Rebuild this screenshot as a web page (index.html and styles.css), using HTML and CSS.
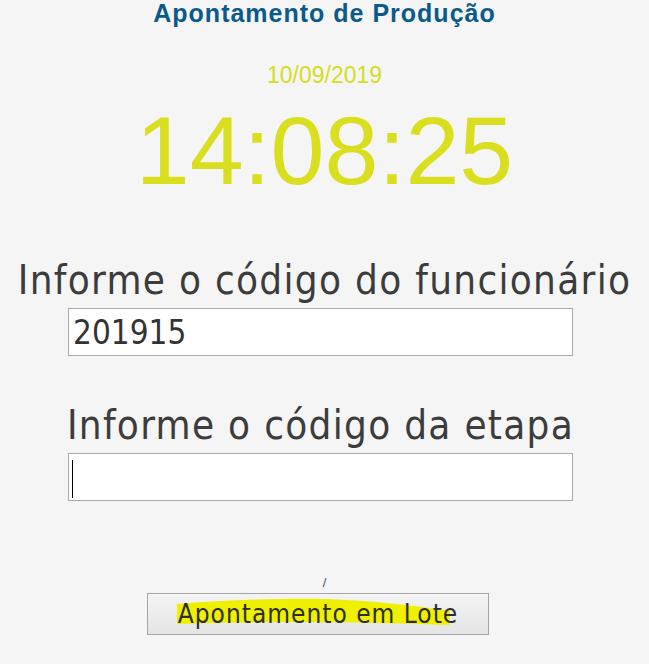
FILE: index.html
```html
<!DOCTYPE html>
<html>
<head>
<meta charset="utf-8">
<link rel="stylesheet" href="styles.css">
</head>
<body>
<div class="page">
  <h1 class="title">Apontamento de Produção</h1>
  <div class="date">10/09/2019</div>
  <div class="clock">14:08:25</div>
  <label class="label label-1">Informe o código do funcionário</label>
  <div class="field"><span class="value">201915</span></div>
  <label class="label label-2">Informe o código da etapa</label>
  <div class="field"><span class="caret"></span></div>
  <div class="slash">/</div>
  <button class="btn">
    <svg class="mark" width="342" height="42" viewBox="0 0 342 42"><path d="M30,11 C80,7 140,5 180,6 C230,8 270,13 303,18 L302,32 C250,30 200,29 150,29 C100,29 60,30 30,31 Z" fill="#eef000"/></svg>
    <span class="btn-text">Apontamento em Lote</span>
  </button>
</div>
</body>
</html>
```
FILE: styles.css
```css
html, body {
  margin: 0;
  padding: 0;
  background: #f5f5f5;
}
.page {
  display: flex;
  flex-direction: column;
  align-items: center;
  width: 649px;
  height: 664px;
  overflow: hidden;
}
.title {
  margin: 0;
  font-family: "Liberation Sans", Arial, sans-serif;
  font-weight: bold;
  font-size: 25px;
  letter-spacing: 1px;
  line-height: 26px;
  color: #0a5a8a;
}
.date {
  margin-top: 36px;
  font-family: "Liberation Sans", Arial, sans-serif;
  font-size: 23px;
  line-height: 26px;
  color: #d6dc1e;
}
.clock {
  margin-top: 8px;
  font-family: "Liberation Sans", Arial, sans-serif;
  font-size: 97px;
  line-height: 110px;
  color: #d9df1f;
}
.label {
  font-family: "DejaVu Sans Condensed", "DejaVu Sans", sans-serif;
  font-size: 40px;
  letter-spacing: 1.3px;
  line-height: 48px;
  color: #3c3c3c;
}
.label-1 { margin-top: 50px; }
.label-2 { margin-top: 45px; margin-right: 8px; }
.field {
  box-sizing: border-box;
  width: 505px;
  height: 48px;
  margin-top: 4px;
  margin-right: 8px;
  background: #fff;
  border: 1px solid #a9a9a9;
  display: flex;
  align-items: center;
  padding-left: 4px;
}
.value {
  font-family: "DejaVu Sans Condensed", "DejaVu Sans", sans-serif;
  font-size: 33px;
  color: #333;
}
.caret {
  width: 1px;
  height: 38px;
  margin-top: 4px;
  margin-left: -1px;
  background: #000;
}
.slash {
  margin-top: 74px;
  font-family: "Liberation Sans", Arial, sans-serif;
  font-size: 13px;
  line-height: 16px;
  color: #44507a;
}
.btn {
  position: relative;
  box-sizing: border-box;
  width: 342px;
  height: 42px;
  margin-top: 2px;
  margin-right: 13px;
  border: 1px solid #a6a6a6;
  background: linear-gradient(#f4f4f4, #e4e4e4);
  padding: 0;
  font-family: "DejaVu Sans Condensed", "DejaVu Sans", sans-serif;
  font-size: 26px;
  letter-spacing: 1px;
  color: #2d2d2d;
}
.mark {
  position: absolute;
  left: -1px;
  top: -1px;
}
.btn-text {
  position: relative;
}
```
